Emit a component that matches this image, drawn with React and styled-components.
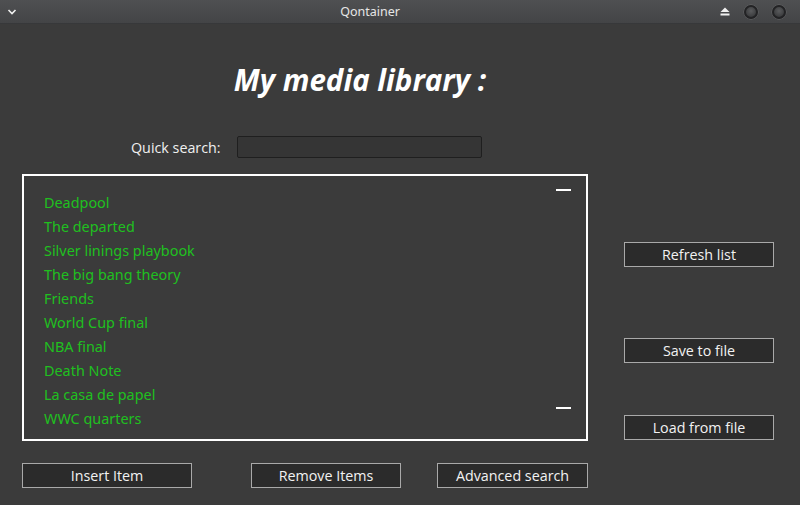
import React from "react";
import styled, { createGlobalStyle } from "styled-components";

const Global = createGlobalStyle`
  html, body { margin: 0; padding: 0; background: #3b3b3b; }
  body { font-family: "Open Sans", "Noto Sans", sans-serif; }
  * { box-sizing: border-box; }
`;

const Window = styled.div`
  width: 800px;
  height: 505px;
  background: #3b3b3b;
  display: flex;
  flex-direction: column;
  overflow: hidden;
`;

const TitleBar = styled.div`
  height: 24px;
  flex: none;
  background: linear-gradient(#4f5052, #434446);
  border-bottom: 1px solid #37383a;
  display: grid;
  grid-template-columns: 60px 1fr 90px;
  align-items: center;
  color: #e6e6e6;
  font-family: "Noto Sans", "DejaVu Sans", sans-serif;
  font-size: 12.5px;
`;

const TitleText = styled.div`
  text-align: center;
  padding-right: 30px;
`;

const TitleLeft = styled.div`
  display: flex;
  align-items: center;
  padding-left: 7px;
`;

const TitleRight = styled.div`
  display: flex;
  align-items: center;
  justify-content: flex-end;
  gap: 14px;
  padding-right: 14px;
`;

const WinCircle = styled.span`
  width: 14px;
  height: 14px;
  border-radius: 50%;
  background: radial-gradient(circle at 50% 40%, #5a5b5d, #303133);
  border: 2px solid #232325;
  box-shadow: 0 0 0 0.5px #6a6b6d;
`;

const Content = styled.div`
  flex: 1;
  padding: 0 22px;
  display: flex;
  flex-direction: column;
`;

const Heading = styled.h1`
  margin: 36px 0 0 0;
  height: 40px;
  line-height: 40px;
  text-align: center;
  padding-right: 80px;
  color: #ffffff;
  font-family: "Open Sans", "Noto Sans", sans-serif;
  font-style: italic;
  font-weight: 700;
  font-size: 29.5px;
`;

const SearchRow = styled.div`
  margin-top: 36px;
  display: flex;
  align-items: center;
  padding-left: 109px;
  height: 22px;
`;

const Label = styled.span`
  color: #f0f0f0;
  font-size: 14.3px;
  width: 106px;
`;

const SearchInput = styled.input`
  width: 245px;
  height: 22px;
  background: #353535;
  border: 1px solid #1f1f1f;
  border-radius: 2px;
  color: #eee;
  outline: none;
`;

const MainRow = styled.div`
  margin-top: 16px;
  display: flex;
`;

const LeftColumn = styled.div`
  width: 566px;
  display: flex;
  flex-direction: column;
`;

const ListBox = styled.div`
  position: relative;
  height: 267px;
  border: 2px solid #ffffff;
  padding: 15px 20px;
`;

const Item = styled.div`
  color: #1fc01f;
  font-size: 14.4px;
  line-height: 24px;
  font-family: "Noto Sans", "Open Sans", sans-serif;
`;

const Dash = styled.span`
  position: absolute;
  right: 15px;
  top: ${(p) => p.$top}px;
  width: 15px;
  height: 2px;
  background: #ffffff;
`;

const BottomRow = styled.div`
  margin-top: 22px;
  display: flex;
`;

const Button = styled.button`
  width: ${(p) => p.$w}px;
  height: 25px;
  margin-left: ${(p) => p.$ml || 0}px;
  margin-top: ${(p) => p.$mt || 0}px;
  background: #2b2b2b;
  border: 1px solid #a9a9a9;
  border-radius: 0;
  color: #f2f2f2;
  font-family: "Open Sans", "Noto Sans", sans-serif;
  font-size: 14.3px;
  padding: 0;
  display: flex;
  align-items: center;
  justify-content: center;
`;

const RightColumn = styled.div`
  margin-left: 36px;
  display: flex;
  flex-direction: column;
`;

const items = [
  "Deadpool",
  "The departed",
  "Silver linings playbook",
  "The big bang theory",
  "Friends",
  "World Cup final",
  "NBA final",
  "Death Note",
  "La casa de papel",
  "WWC quarters",
];

export default function App() {
  return (
    <>
      <Global />
      <Window>
        <TitleBar>
          <TitleLeft>
            <svg width="10" height="8" viewBox="0 0 10 8">
              <path d="M1.5 2 L5 5.5 L8.5 2" stroke="#f0f0f0" strokeWidth="1.6" fill="none" />
            </svg>
          </TitleLeft>
          <TitleText>Qontainer</TitleText>
          <TitleRight>
            <svg width="10" height="9" viewBox="0 0 10 9">
              <path d="M5 0.5 L9.5 5 L0.5 5 Z" fill="#f0f0f0" />
              <rect x="0.5" y="6.5" width="9" height="2" fill="#f0f0f0" />
            </svg>
            <WinCircle />
            <WinCircle />
          </TitleRight>
        </TitleBar>
        <Content>
          <Heading>My media library :</Heading>
          <SearchRow>
            <Label>Quick search:</Label>
            <SearchInput />
          </SearchRow>
          <MainRow>
            <LeftColumn>
              <ListBox>
                {items.map((t) => (
                  <Item key={t}>{t}</Item>
                ))}
                <Dash $top={13} />
                <Dash $top={231} />
              </ListBox>
              <BottomRow>
                <Button $w={170}>Insert Item</Button>
                <Button $w={150} $ml={59}>Remove Items</Button>
                <Button $w={151} $ml={36}>Advanced search</Button>
              </BottomRow>
            </LeftColumn>
            <RightColumn>
              <Button $w={150} $mt={68}>Refresh list</Button>
              <Button $w={150} $mt={71}>Save to file</Button>
              <Button $w={150} $mt={52}>Load from file</Button>
            </RightColumn>
          </MainRow>
        </Content>
      </Window>
    </>
  );
}
